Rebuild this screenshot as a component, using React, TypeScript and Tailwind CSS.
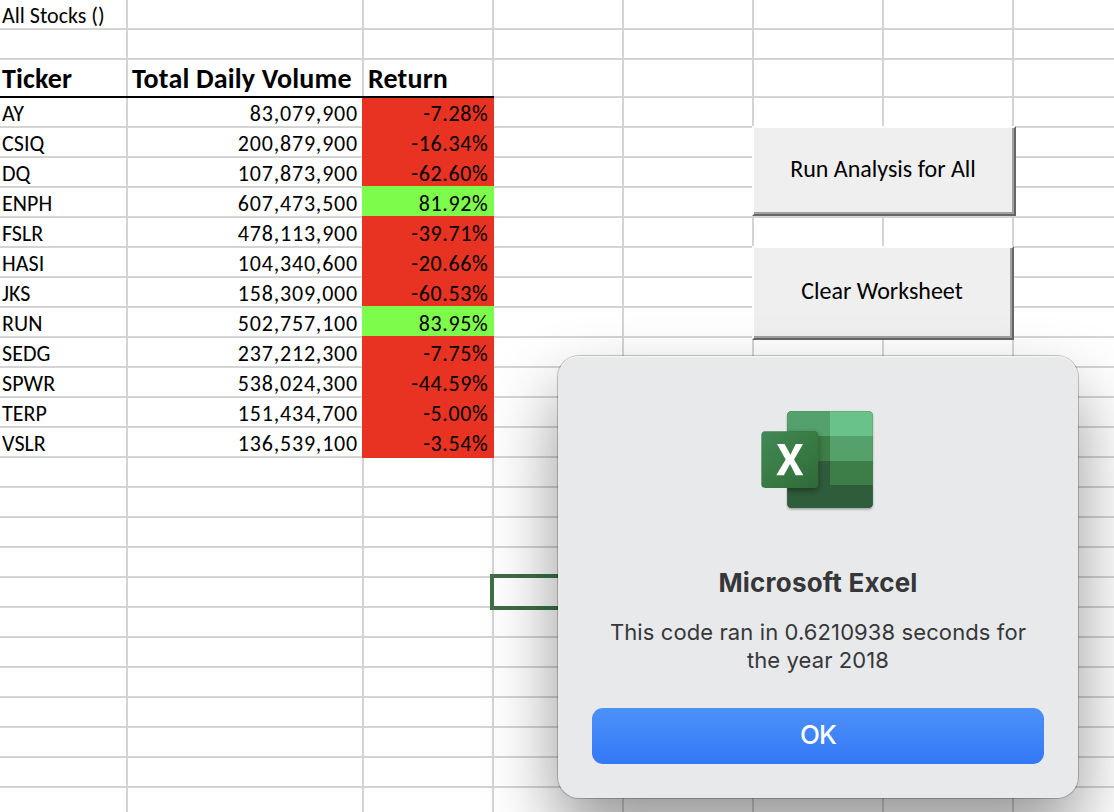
const STOCKS = [
  ['AY', '83,079,900', '-7.28%'],
  ['CSIQ', '200,879,900', '-16.34%'],
  ['DQ', '107,873,900', '-62.60%'],
  ['ENPH', '607,473,500', '81.92%'],
  ['FSLR', '478,113,900', '-39.71%'],
  ['HASI', '104,340,600', '-20.66%'],
  ['JKS', '158,309,000', '-60.53%'],
  ['RUN', '502,757,100', '83.95%'],
  ['SEDG', '237,212,300', '-7.75%'],
  ['SPWR', '538,024,300', '-44.59%'],
  ['TERP', '151,434,700', '-5.00%'],
  ['VSLR', '136,539,100', '-3.54%'],
];

const cell = 'border-r-2 border-b-2 border-[#d4d4d4] whitespace-nowrap';

const header =
  'relative z-10 h-[36px] whitespace-nowrap border-r-2 border-[#d4d4d4] text-[28px] font-bold leading-[38px] tracking-[0.16px] shadow-[0_2px_0_#000]';

function Blanks({ count }: { count: number }) {
  return (
    <>
      {Array.from({ length: count }, (_, i) => (
        <div key={i} className={cell} />
      ))}
    </>
  );
}

function Sheet() {
  return (
    <div className="grid w-[1144px] grid-cols-[128px_236px_130px_130px_130px_130px_130px_130px] grid-rows-[30px_30px_38px] auto-rows-[30px] text-[22px] leading-[26px] text-black">
      <div className={`${cell} pl-[2px] pt-[3px]`}>All Stocks ()</div>
      <Blanks count={7} />
      <Blanks count={8} />
      <div className={`${header} pl-[2px]`}>Ticker</div>
      <div className={`${header} pl-[4px]`}>Total Daily Volume</div>
      <div className={`${header} pl-[4px]`}>Return</div>
      <Blanks count={5} />
      {STOCKS.map(([ticker, volume, change]) => (
        <div key={ticker} className="contents">
          <div className={`${cell} pl-[2px] pt-[3px] tracking-[0.05px]`}>{ticker}</div>
          <div className={`${cell} pr-[4px] pt-[3px] text-right tracking-[0.8px]`}>{volume}</div>
          <div
            className={`-ml-[2px] -mt-[2px] whitespace-nowrap pr-[5.5px] pt-[5px] text-right tracking-[0.65px] ${
              change.startsWith('-') ? 'bg-[#e83323]' : 'bg-[#7dfc4c]'
            }`}
          >
            {change}
          </div>
          <Blanks count={5} />
        </div>
      ))}
      <Blanks count={96} />
    </div>
  );
}

function SheetButton({ label, className }: { label: string; className: string }) {
  return (
    <button
      className={`absolute border-2 border-b-[#666] border-l-white border-r-[#666] border-t-white bg-[#a0a0a0] pb-[2px] pr-[2px] text-[24px] text-black ${className}`}
    >
      <span className="flex h-full w-full items-center justify-center whitespace-nowrap bg-[#efefef] pb-[2px]">{label}</span>
    </button>
  );
}

function ExcelIcon() {
  return (
    <svg className="h-[130px] w-[150px]" viewBox="0 0 150 130">
      <defs>
        <linearGradient id="tile" x1="0" y1="0" x2="1" y2="1">
          <stop offset="0" stopColor="#43885a" />
          <stop offset=".5" stopColor="#397b43" />
          <stop offset="1" stopColor="#2f693a" />
        </linearGradient>
        <clipPath id="book">
          <rect x="47.3" y="16.3" width="85.4" height="96.4" rx="4" />
        </clipPath>
        <filter id="bookShadow" x="-20%" y="-20%" width="140%" height="140%">
          <feDropShadow dx="0" dy="1.5" stdDeviation="1.3" floodOpacity=".35" />
        </filter>
        <filter id="tileShadow" x="-30%" y="-30%" width="160%" height="160%">
          <feDropShadow dx="0" dy="2.5" stdDeviation="3" floodOpacity=".4" />
        </filter>
      </defs>
      <rect x="47.3" y="16.3" width="85.4" height="96.4" rx="4" fill="#2f5c3a" filter="url(#bookShadow)" />
      <g clipPath="url(#book)">
        <rect x="47" y="16" width="43" height="25" fill="#54a16c" />
        <rect x="90" y="16" width="43" height="25" fill="#69c388" />
        <rect x="47" y="41" width="43" height="25" fill="#3d7d47" />
        <rect x="90" y="41" width="43" height="25" fill="#54a16c" />
        <rect x="47" y="66" width="43" height="47" fill="#2f5c3a" />
        <rect x="90" y="66" width="43" height="24" fill="#3d7d47" />
        <rect x="90" y="90" width="43" height="23" fill="#2f5c3a" />
        <rect x="21.3" y="36.3" width="56.8" height="56.6" rx="4" fill="#2f693a" filter="url(#tileShadow)" />
      </g>
      <rect x="21.3" y="36.3" width="56.8" height="56.6" rx="4" fill="url(#tile)" />
      <path d="M37 49h7.600l5.900 10.800L55.700 49H63l-8.900 15.400 9.200 15.800h-7.600L50 69l-6.100 11.200h-7.700l9.500-15.800z" fill="#fff" />
    </svg>
  );
}

function AlertDialog() {
  return (
    <div
      role="dialog"
      className="absolute left-[558px] top-[356px] flex h-[442px] w-[520px] flex-col items-center rounded-[21px] bg-[#e8e9eb] font-['Inter',sans-serif] text-[#363739] shadow-[0_0_0_1px_rgba(0,0,0,0.22),0_36px_70px_rgba(0,0,0,0.42),inset_0_1px_0_rgba(255,255,255,0.7)]"
    >
      <div className="mt-[39px] pr-[6px]">
        <ExcelIcon />
      </div>
      <h1 className="mt-[42px] whitespace-nowrap text-[26px] font-bold leading-[32px] tracking-[0.2px]">Microsoft Excel</h1>
      <p className="mt-[19px] whitespace-nowrap text-center text-[22px] leading-[28px] tracking-[0.1px]">
        This code ran in 0.6210938 seconds for
        <br />
        the year 2018
      </p>
      <button className="mt-[34px] h-[56px] w-[452px] rounded-[11px] bg-linear-to-b from-[#4c91f8] to-[#3478f6] text-[26px] font-medium leading-[54px] tracking-[-0.8px] text-white">
        <span className="relative -top-px">OK</span>
      </button>
    </div>
  );
}

export default function App() {
  return (
    <main className="relative h-[812px] w-[1114px] overflow-hidden bg-white font-['Carlito','Lato',sans-serif]">
      <Sheet />
      <div className="absolute left-[490px] top-[574px] h-[36px] w-[136px] border-4 border-[#3b7046]" />
      <SheetButton label="Run Analysis for All" className="left-[752px] top-[126px] h-[90px] w-[264px]" />
      <SheetButton label="Clear Worksheet" className="left-[752px] top-[246px] h-[94px] w-[262px]" />
      <AlertDialog />
    </main>
  );
}
